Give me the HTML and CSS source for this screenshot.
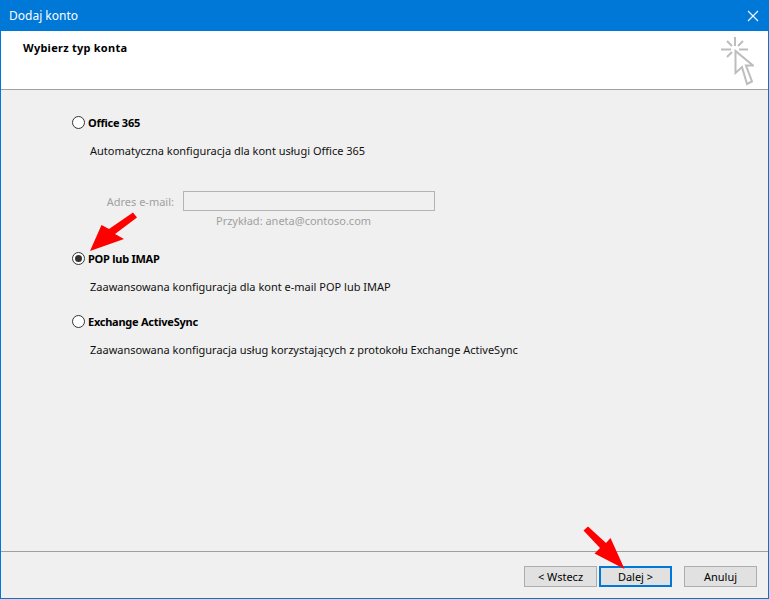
FILE: index.html
```html
<!DOCTYPE html>
<html lang="pl">
<head>
<meta charset="utf-8">
<title>Dodaj konto</title>
<link rel="stylesheet" href="styles.css">
</head>
<body>
<div class="window">
  <div class="titlebar">
    <span class="title">Dodaj konto</span>
    <svg class="close" width="12" height="12" viewBox="0 0 12 12"><path d="M1 1L11 11M11 1L1 11" stroke="#fff" stroke-width="1.1" fill="none"/></svg>
  </div>
  <div class="header">
    <h1 class="heading">Wybierz typ konta</h1>
    <svg class="wizard" width="34" height="49" viewBox="0 0 34 49">
      <g stroke="#bdbdbd" stroke-width="2" fill="none">
        <path d="M15 0V9M1 12.500H11M19 12.500H28M7 4L12 9M23 4L18 9M7 20L12 15"/>
        <path d="M15.500 14V36L22 30L27 47L32 44.500L26 28.500H33Z"/>
      </g>
    </svg>
  </div>
  <main class="content">
    <label class="option first"><span class="radio"></span><span class="opt-name">Office 365</span></label>
    <p class="desc">Automatyczna konfiguracja dla kont usługi Office 365</p>
    <div class="email-row">
      <span class="email-label">Adres e-mail:</span>
      <span class="email-input"></span>
    </div>
    <p class="example">Przykład: aneta@contoso.com</p>
    <label class="option pop"><span class="radio checked"></span><span class="opt-name">POP lub IMAP</span></label>
    <p class="desc">Zaawansowana konfiguracja dla kont e-mail POP lub IMAP</p>
    <label class="option exchange"><span class="radio"></span><span class="opt-name">Exchange ActiveSync</span></label>
    <p class="desc">Zaawansowana konfiguracja usług korzystających z protokołu Exchange ActiveSync</p>
  </main>
  <footer class="footer">
    <span class="btn">&lt; Wstecz</span>
    <span class="btn primary">Dalej &gt;</span>
    <span class="btn cancel">Anuluj</span>
  </footer>
  <svg class="arrow arrow-pop" width="50" height="50" viewBox="0 0 50 50"><path d="M1 48L12.500 22L20 26L44 9.500L48 14.500L26 31L35 36Z" fill="#fe0000"/></svg>
  <svg class="arrow arrow-next" width="50" height="50" viewBox="0 0 50 50"><path d="M42.500 44L28.500 13L24 18L6 1.500L1.500 5.500L18 23L12.500 28.500Z" fill="#fe0000"/></svg>
</div>
</body>
</html>
```
FILE: styles.css
```css
* { box-sizing: border-box; }
html, body { margin: 0; padding: 0; }
body { font-family: "Noto Sans", "Open Sans", sans-serif; font-size: 11px; color: #111; }
.window {
  position: relative;
  width: 769px;
  height: 599px;
  border: 1px solid #0078d7;
  border-top: 0;
  background: #f0f0f0;
  display: flex;
  flex-direction: column;
}
.titlebar {
  height: 31px;
  background: #0078d7;
  color: #fff;
  display: flex;
  align-items: center;
  justify-content: space-between;
  padding: 0 9px 0 8px;
  font-size: 12px;
  flex: none;
}
.close { display: block; }
.header {
  height: 59px;
  flex: none;
  background: #fff;
  border-bottom: 1px solid #a0a0a0;
  display: flex;
  justify-content: space-between;
  padding: 6px 14px 0 22px;
}
.heading { margin: 3px 0 0; font-size: 11px; line-height: 15px; font-weight: 700; color: #000; letter-spacing: 0.25px; }
.wizard { display: block; }
.content { flex: 1; padding: 0 0 0 71px; }
.option { display: flex; align-items: center; height: 14px; gap: 3px; font-weight: 700; color: #000; letter-spacing: -0.25px; }
.first { margin-top: 25px; }
.pop { margin-top: 23px; }
.exchange { margin-top: 20px; }
.radio { width: 13px; height: 13px; border: 1px solid #333; border-radius: 50%; background: #fff; flex: none; display: flex; align-items: center; justify-content: center; }
.checked::after { content: ""; width: 7px; height: 7px; border-radius: 50%; background: #333; }
.desc { margin: 15px 0 0 18px; line-height: 14px; height: 14px; }
.email-row { display: flex; align-items: center; margin-top: 33px; height: 20px; color: #a0a0a0; }
.email-label { width: 102px; text-align: right; }
.email-input { margin-left: 9px; width: 252px; height: 20px; border: 1px solid #b4b4b4; background: #f0f0f0; }
.example { margin: 3px 0 0 144px; line-height: 14px; color: #a0a0a0; }
.footer {
  height: 47px;
  flex: none;
  border-top: 1px solid #a0a0a0;
  display: flex;
  align-items: flex-start;
  padding: 14px 0 0 523px;
}
.btn {
  width: 73px;
  height: 21px;
  background: #e1e1e1;
  border: 1px solid #adadad;
  display: flex;
  align-items: center;
  justify-content: center;
  color: #000;
}
.primary { margin-left: 2px; border: 2px solid #0078d7; }
.cancel { margin-left: 12px; }
.arrow { position: absolute; }
.arrow-pop { left: 88px; top: 203px; }
.arrow-next { left: 581px; top: 525px; }
```
